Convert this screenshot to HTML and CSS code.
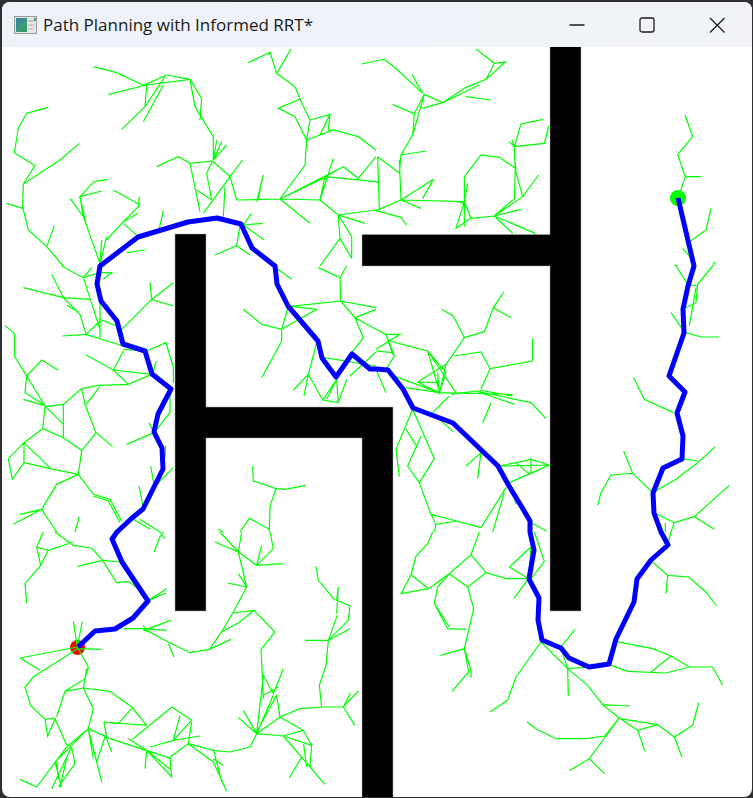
FILE: index.html
```html
<!DOCTYPE html>
<html lang="en">
<head>
    <meta charset="UTF-8">
    <meta name="viewport" content="width=device-width, initial-scale=1.0">
    <title>Path Planning with Informed RRT*</title>
    <link rel="stylesheet" href="styles.css">
</head>
<body>
    <div class="window">
      <div class="titlebar">
        <svg class="app-icon" width="23" height="18" viewBox="0 0 23 18">
          <defs>
            <linearGradient id="icon-map" x1="0" y1="0" x2="1" y2="1">
              <stop offset="0" stop-color="#2f7fa8"/>
              <stop offset="0.6" stop-color="#3f9a78"/>
              <stop offset="1" stop-color="#2e9a50"/>
            </linearGradient>
          </defs>
          <rect x="0.5" y="0.5" width="22" height="17" fill="#e4e4e4" stroke="#9a9a9a"/>
          <rect x="2" y="2" width="11" height="14" fill="url(#icon-map)"/>
          <rect x="14" y="4" width="6" height="2" fill="#c4c4c4"/>
          <rect x="14" y="8" width="6" height="2" fill="#cfcfcf"/>
          <rect x="14" y="12" width="6" height="2" fill="#cfcfcf"/>
          <rect x="20" y="2" width="2" height="3" fill="#4f9a78"/>
        </svg>
        <span class="title">Path Planning with Informed RRT*</span>
        <div class="controls">
          <div class="control">
            <svg width="16" height="16" viewBox="0 0 16 16"><path d="M0.5 8H15.5"/></svg>
          </div>
          <div class="control">
            <svg width="16" height="16" viewBox="0 0 16 16"><rect x="1" y="1" width="14" height="14" rx="2"/></svg>
          </div>
          <div class="control">
            <svg width="16" height="16" viewBox="0 0 16 16"><path d="M1 1L15.5 15.5M15.5 1L1 15.5"/></svg>
          </div>
        </div>
      </div>

      <!-- viewBox is in window pixels, each tile below was traced at 3x -->
      <svg class="map" width="750" height="750" viewBox="2 47 750 750">
        <path class="walls" d="M175 234H206V407H393V810H362V438H206V611H175Z"/>
        <path class="walls" d="M550 40H581V611H550V266H362V234.500H550Z"/>
        <circle class="start" cx="77.500" cy="647.500" r="7.500"/>
        <circle class="goal" cx="678" cy="198" r="8"/>

        <g transform="scale(.33333)">
          <path class="tree" d="M280 200 350 218 430 256M325 283 440 255 570 238M430 256 500 225 570 238 605 295 600 360M570 238 585 320 640 410 640 480M495 230 435 320 365 388M490 255 430 365M440 255 435 320M640 480 650 420M640 480 665 425M640 480 680 435M470 500 535 470 570 490 638 483M570 490 600 635M638 483 620 520 635 600M638 483 690 530 710 600M690 530 728 480M690 530 610 640M675 560 670 650M590 570 635 600M710 600 840 597M770 605 790 525M775 600 785 540M840 597 960 600M840 597 970 535M840 597 1030 500M840 597 930 670M840 597 915 495 920 420M960 600 1000 475M960 600 975 530 1128 545M975 530 1030 500 1075 535 1128 470M920 420 1000 390 1075 410 1128 450M920 420 885 350 835 325 900 297M885 260 900 297 930 360 920 420M930 360 990 343 960 405M990 343 985 390 1010 392M885 260 830 220 810 157 745 188M830 220 873 147M1085 192 1128 183M960 600 1015 645 1080 665M1015 645 1128 630M1015 645 1020 715 960 798M1015 645 1055 710 1055 775M1020 715 1055 775M1015 645 1095 670M145 322 80 340 55 385 43 458 105 497 70 552M238 430 180 480 70 552 68 620 85 690 140 740 190 798M20 610 68 625M163 678 140 740M282 545 325 538M282 545 240 590 305 573M240 590 250 650M210 595 250 650 300 790M240 590 260 680M340 570 415 612M418 590 415 620 370 665M370 665 415 640M320 720 370 665M305 720 300 790M320 710 300 790M370 670 415 710M490 632 478 685M380 758 435 750M730 675 788 670M730 675 755 640M730 675 793 720M720 675 710 737 645 765M710 737 750 765"/>
        </g>
        <g transform="translate(376 0) scale(.33333)">
          <path class="tree" d="M0 183 25 178 65 210 140 280M108 223 140 280M145 283 200 308 270 262 330 238 355 190 388 186 330 238M300 147 355 190M145 283 115 340 110 405M145 283 110 405M140 325 200 308M270 290 345 300M200 308 310 255M50 313 112 340M110 405 75 465 70 520M75 465 150 453M70 480 75 600M70 520 45 500 5 470M5 470 10 630M0 548 8 545M75 600 172 538 140 595M75 600 135 625M75 600 265 605M75 600 0 632M0 632 75 652 92 675M265 605 240 685 285 655M265 605 265 530 315 465 370 472 418 505 415 600M265 605 275 550M265 605 285 655 355 648M265 605 265 680M240 605 265 610M355 648 440 590 488 525M355 648 435 628M355 648 410 600M355 648 410 700M355 648 478 700M440 590 418 510 415 440 435 372 502 358M415 440 505 430 518 378M415 440 400 425M415 440 408 420M415 470 420 510M927 345 950 410 905 463 928 530 975 530M928 530 908 590M1005 625 990 690 945 722M920 745 950 780M895 795 905 798M1018 785 1010 798"/>
        </g>
        <g transform="translate(0 266) scale(.33333)">
          <path class="tree" d="M185 0 250 35 300 20M250 35 275 5M250 35 300 190M300 20 335 20 310 40M300 105 300 220M155 25 190 95 240 145 258 205M70 65 190 95 270 100M200 118 235 138M300 160 350 180M258 205 187 210M258 205 300 165M258 205 370 240M450 50 455 100 520 50M455 100 520 120M455 100 365 190M370 250 440 255 498 230 520 305 520 350M370 255 340 312M258 267 340 312 455 325M340 312 385 355 455 325M468 285 460 320M385 355 295 358 245 368 190 415 135 422M15 178 43 203 43 270 80 330 125 282 175 313M80 330 135 420 190 475M80 330 75 380 130 415M70 400 130 418M245 368 255 415 288 500 338 542M300 362 258 415M288 500 245 555 235 625M135 422 128 488 190 515 245 553M190 415 190 515M128 488 72 530 25 578 37 640 72 590 72 530M72 530 155 610M72 590 160 610 235 625M235 625 280 685 330 700 365 765M280 690 325 705 360 770M235 625 170 655 125 730M125 730 40 775M125 730 60 745M125 730 170 798M238 752 225 798M510 380 510 440 470 490M447 470 462 500 380 535M497 540 495 575M520 605 470 655M452 600 462 655M417 660 430 725M420 760 480 798M400 760 450 790M820 0 875 40M730 130 785 175 845 190 865 120M845 190 845 225 785 335M845 190 950 130 880 122M865 122 1022 105 1020 35 955 5M1020 35 1040 0M1022 105 1065 155 1128 190M1065 155 1090 215 1055 260M1022 105 1128 125M1065 155 1128 130M950 230 925 325 880 372M925 325 912 390M925 325 968 402 1015 410 1040 340M968 402 1010 340M975 275 1128 300M1010 340 1015 410M1010 340 980 400M1128 258 1050 330M758 600 760 645 828 668 810 720 808 798M828 668 855 670 918 658M808 790 748 757 720 798M655 790 670 798"/>
        </g>
        <g transform="translate(376 266) scale(.33333)">
          <path class="tree" d="M0 190 30 205 72 205 40 225M30 205 50 265M0 255 50 260M0 310 30 380M30 205 55 270 30 310M0 250 40 225 155 255 190 375M155 255 210 320M155 255 240 380M125 348 210 295 265 215M125 348 190 380M125 348 190 350M185 320 190 385M210 295 190 385M210 320 190 380M235 270 315 258 342 308 470 285 470 217M342 308 315 370M265 215 325 197 352 125 405 155M352 125 383 78M265 215 232 150 197 130M90 365 190 380 410 385M40 325 190 380M220 390 170 440M225 385 300 375 465 410 510 458M300 375 415 415M310 372 410 390M345 410 320 470M190 460 232 497M110 430 175 578 130 650M110 430 60 550 70 632M90 490 125 545M130 650 95 600 135 510M130 650 165 745 315 785M165 745 180 775 175 798M180 775 245 765M315 785 390 665M385 680 350 798M315 560 270 600M315 560 305 637M370 600 465 580 520 597 400 650M420 590 460 625 520 597M465 575 465 625M370 600 520 597M465 770 512 795M415 695 420 715M900 0 935 55M1010 0 965 55 960 110 930 125M965 60 930 55M960 65 940 180M885 140 920 190M930 200 975 213 1028 213M773 335 805 400 892 440M743 555 770 622 705 627 675 680 665 718M770 622 830 680M830 680 900 640 965 590 1018 542M918 578 965 585M830 680 890 645M835 740 895 770 955 752 1060 658M955 752 1015 790M895 770 885 798M868 770 868 798"/>
        </g>
        <g transform="translate(0 532) scale(.33333)">
          <path class="tree" d="M165 0 220 40 275 48M130 0 110 45 122 100 75 155 80 213M110 45 145 55 220 30M145 55 122 100M275 48 308 85 232 103M308 85 360 90M308 85 350 152 385 148 415 170M445 205 500 170M445 205 498 183M462 60 480 15 490 0M480 0 495 20M645 30 715 60M660 0 715 60 770 100M725 0 715 60 740 165M770 100 850 95M770 100 820 50 810 0M770 100 785 40M715 125 740 165M683 153 740 165M740 165 700 240 665 300M700 243 762 235M762 235 825 300 783 352 787 430 790 500M762 235 720 270 665 300 628 352 570 362 505 330 430 290 370 290M628 352 693 322M505 335 522 375M430 295 513 265M430 290 500 295M430 280 440 300M220 268 232 345M247 268 232 345M232 350 305 352M60 378 232 345M60 378 120 415M232 350 100 435 75 465 92 520 135 562 165 558M135 562 143 612 165 560 200 640M232 345 265 405 255 440 195 478M260 410 250 468 195 478 170 555M250 468 330 478 395 525 440 580M250 468 280 530 265 590M395 530 355 575 312 570 440 580M312 570 320 620 335 660M265 590 200 645 110 765 60 742M265 590 330 620 515 680M265 590 290 690 305 750M265 590 165 690 185 765M265 590 280 680M320 600 290 690M215 645 155 770M215 645 225 695 175 765M200 680 180 765M170 690 175 740M400 620 515 525 575 565 520 625 540 550M385 620 440 655 515 735 510 675M440 655 435 710M440 655 515 715M520 625 600 612M575 570 565 635M450 645 520 625M510 675 565 635 640 655 690 660 750 645 770 605M565 635 640 690 680 778M640 650 665 750M640 680 670 700M770 605 850 612 910 595M770 605 715 557M770 605 730 535M770 605 790 430 820 485 850 410M770 605 820 490M790 490 835 465M770 600 830 490 840 555 910 595 935 640 930 705M770 605 840 555 900 530 965 525 1030 525 1075 477M965 525 958 460 978 400 985 325 1050 290M985 325 915 325M1030 525 1065 580M1030 525 1052 482M985 325 1045 265 1050 222 1010 205 1015 165 1010 245M985 325 1012 250M1005 205 955 145 948 103M850 612 930 705 975 757M905 675 868 738M850 612 935 640M910 630 920 705"/>
        </g>
        <g transform="translate(376 532) scale(.33333)">
          <path class="tree" d="M170 0 155 35 120 72 105 128 75 185 158 170 105 128M158 170 220 125 285 68 330 122 275 165 220 125M310 0 285 68M330 122 390 140 458 140M400 105 458 140M400 105 465 45M465 45 458 140M475 0 505 88 458 150M458 140 413 200M220 125 185 165 175 215 215 290 270 292M175 215 220 285M275 165 293 230 265 350 285 415M265 350 193 370M265 350 278 420 228 478M285 415 285 437M495 330 420 435 395 505 342 540M495 330 575 410 635 460 680 518 762 522M680 518 730 558M575 410 577 492M575 410 640 405M555 345 597 292M555 350 575 410M730 558 640 680 580 716M640 680 685 725M730 558 687 612 630 620 540 620 480 590 453 570M730 558 785 595 845 578 895 615 950 580 968 512M895 615 918 675M785 595 807 658M730 560 845 578M720 328 830 350 885 372 940 405 1010 405 1040 460M700 398 755 418 870 423 940 405M885 372 825 420M830 90 875 130 870 185M875 130 938 135 990 180 1022 222M885 0 875 40M865 5 880 38"/>
        </g>

        <polyline class="route" points="678,198 694,266 688,286 683,309 684,333 669,376 685,392 677,413 683,436 682,459 663,468 653,493 654,513 661,532 668,545 651,560 637,579 634,602 616,639 609,664 589,667 569,658 561,648 542,640 538,620 539,598 529,579 534,550 530,532 530,521 523,509 509,486 498,466 453,423 413,408 403,389 388,370 376,369 370,369 352,354 336,377 322,358 318,341 288,306 277,284 275,266 252,248 241,224 217,218 188,222 138,237 100,266 97,284 101,301 117,321 123,344 145,351 152,374 171,389 158,414 154,432 162,448 163,469 143,509 132,518 117,532 112,539 122,562 148,601 133,618 115,629 95,631 78,647"/>
      </svg>
    </div>
</body>
</html>
```

FILE: styles.css
```css
html, body {
  margin: 0;
  padding: 0;
  width: 100%;
  height: 100%;
  overflow: hidden;
}
body {
  background: #303033;
}
.window {
  margin: 2px 1px 1px 2px;
  height: 795px;
  border-radius: 8px;
  overflow: hidden;
  background: #fff;
}
.titlebar {
  display: flex;
  align-items: center;
  height: 45px;
  padding-left: 12px;
  background: linear-gradient(to right, #eef2f9, #f1f3f8);
}
.app-icon {
  flex: none;
  margin-right: 6px;
}
.title {
  font-family: "Open Sans", sans-serif;
  font-size: 17px;
  color: #1a1a1a;
  white-space: nowrap;
}
.controls {
  display: flex;
  margin-left: auto;
}
.control {
  display: flex;
  align-items: center;
  justify-content: center;
  width: 70px;
}
.control svg {
  fill: none;
  stroke: #1c1c1c;
  stroke-width: 1.300;
}
.map {
  display: block;
}
.walls {
  fill: #000;
  stroke: #aaa;
  stroke-width: 0.500;
}
.start {
  fill: #ff0000;
}
.goal {
  fill: #00ff00;
}
.tree {
  fill: none;
  stroke: #00ff00;
  stroke-width: 1.200;
  vector-effect: non-scaling-stroke;
}
.route {
  fill: none;
  stroke: #0000ff;
  stroke-width: 5;
  stroke-linejoin: round;
}
```
